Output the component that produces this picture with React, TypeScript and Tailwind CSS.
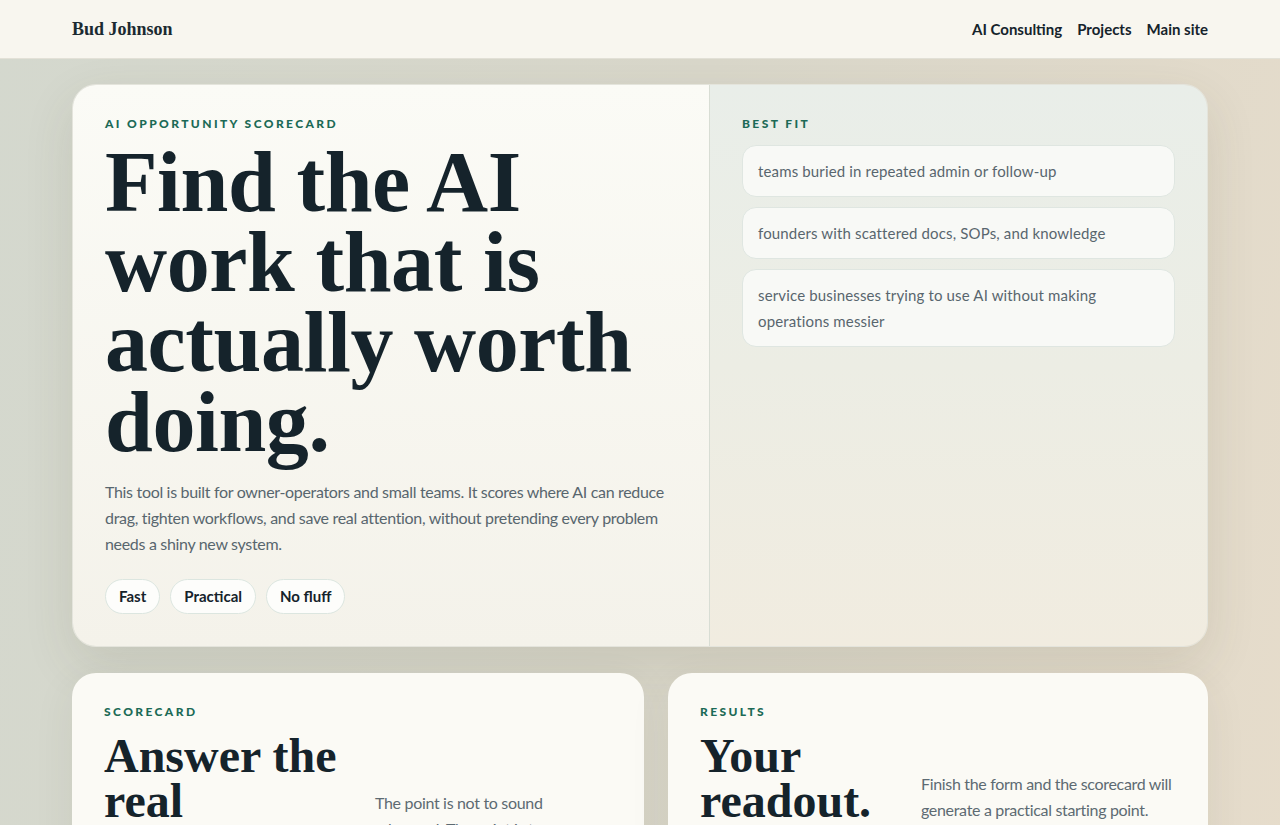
import React from "react";

const sans = { fontFamily: "Lato, 'Noto Sans', sans-serif" };

function Eyebrow({ children }: { children: React.ReactNode }) {
  return (
    <div className="font-['Lato',sans-serif] text-[12px] font-black uppercase leading-[14px] tracking-[0.2em] text-[#1c6a56]">
      {children}
    </div>
  );
}

function Pill({ children }: { children: React.ReactNode }) {
  return (
    <span className="inline-flex h-[35px] items-center rounded-full border border-[#dce6e0] bg-[#fdfdfb] px-[13px] text-[15px] font-bold text-[#15232b]">
      {children}
    </span>
  );
}

function FitItem({ children }: { children: React.ReactNode }) {
  return (
    <div className="rounded-[14px] border border-[#dfe6e1] bg-[#f8f9f6] px-[15px] py-[12px] text-[15px] leading-[26px] tracking-[0.01em] text-[#58666e]">
      {children}
    </div>
  );
}

export default function App() {
  return (
    <div
      className="min-h-screen bg-[linear-gradient(100deg,#d4d8ce_0%,#d9d7ca_50%,#e6dccb_100%)] font-['Lato',sans-serif] text-[#15232b]"
      style={sans}
    >
      <header className="h-[59px] border-b border-[#e3e1d7] bg-[#f8f6ef]">
        <div className="mx-auto flex h-full w-[1136px] items-center justify-between">
          <div className="font-['Liberation_Serif',serif] text-[18px] font-bold text-[#1b2a31]">
            Bud Johnson
          </div>
          <nav className="flex items-center gap-[15px] text-[15px] font-bold text-[#15232b]">
            <span>AI Consulting</span>
            <span>Projects</span>
            <span>Main site</span>
          </nav>
        </div>
      </header>

      <main className="mx-auto w-[1136px] pt-[25px] pb-10">
        <section className="grid grid-cols-[636px_1fr] overflow-hidden rounded-[24px] border border-[#e4e4dc] shadow-[0_18px_50px_rgba(70,70,50,0.12)]">
          <div className="bg-[linear-gradient(180deg,#fbfbf6_0%,#f4f2ea_100%)] px-8 pt-8 pb-8">
            <Eyebrow>AI Opportunity Scorecard</Eyebrow>
            <h1 className="mt-[11px] font-['Liberation_Serif',serif] text-[86px] font-bold leading-[80px] tracking-[-0.005em] text-[#15232b]">
              Find the AI
              <br />
              work that is
              <br />
              actually worth
              <br />
              doing.
            </h1>
            <p className="mt-[17px] max-w-[570px] text-[16px] leading-[26px] tracking-[-0.02em] text-[#58666e]">
              This tool is built for owner-operators and small teams. It scores where AI can reduce
              drag, tighten workflows, and save real attention, without pretending every problem
              needs a shiny new system.
            </p>
            <div className="mt-[22px] flex gap-[10px]">
              <Pill>Fast</Pill>
              <Pill>Practical</Pill>
              <Pill>No fluff</Pill>
            </div>
          </div>
          <div className="border-l border-[#d8ddd4] bg-[linear-gradient(180deg,#e9eee9_0%,#ecede4_50%,#f1ece0_100%)] px-8 pt-8">
            <Eyebrow>Best Fit</Eyebrow>
            <div className="mt-[14px] flex flex-col gap-[10px]">
              <FitItem>teams buried in repeated admin or follow-up</FitItem>
              <FitItem>founders with scattered docs, SOPs, and knowledge</FitItem>
              <FitItem>service businesses trying to use AI without making operations messier</FitItem>
            </div>
          </div>
        </section>

        <section className="mt-[26px] grid grid-cols-[572px_1fr] gap-6">
          <div className="rounded-[24px] bg-[#fbfaf5] px-8 pt-8 pb-8 shadow-[0_12px_40px_rgba(70,70,50,0.08)]">
            <Eyebrow>Scorecard</Eyebrow>
            <div className="mt-[14px] grid grid-cols-[1fr_237px] items-end gap-6">
              <h2 className="font-['Liberation_Serif',serif] text-[48px] font-bold leading-[45px] text-[#15232b]">
                Answer the real questions.
              </h2>
              <p className="text-[16px] leading-[26px] tracking-[-0.02em] text-[#5d6a72]">
                The point is not to sound advanced. The point is to see where time actually leaks.
              </p>
            </div>
          </div>
          <div className="rounded-[24px] bg-[#fbfaf5] px-8 pt-8 pb-8 shadow-[0_12px_40px_rgba(70,70,50,0.08)]">
            <Eyebrow>Results</Eyebrow>
            <div className="mt-[14px] grid grid-cols-[1fr_255px] items-end gap-6">
              <h2 className="font-['Liberation_Serif',serif] text-[48px] font-bold leading-[45px] text-[#15232b]">
                Your readout.
              </h2>
              <p className="text-[16px] leading-[26px] tracking-[-0.02em] text-[#5d6a72]">
                Finish the form and the scorecard will generate a practical starting point.
              </p>
            </div>
          </div>
        </section>
      </main>
    </div>
  );
}
